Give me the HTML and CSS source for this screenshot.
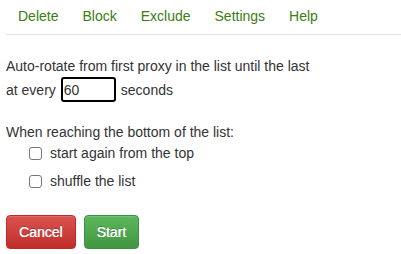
FILE: index.html
```html
<!DOCTYPE html>
<html>
<head>
<meta charset="utf-8">
<link rel="stylesheet" href="styles.css">
</head>
<body>
<div class="page">
  <nav class="nav">
    <a class="nav-link">Delete</a>
    <a class="nav-link">Block</a>
    <a class="nav-link">Exclude</a>
    <a class="nav-link">Settings</a>
    <a class="nav-link">Help</a>
  </nav>
  <p class="line">Auto-rotate from first proxy in the list until the last</p>
  <div class="row">
    <span>at every</span>
    <input class="num" type="text" value="60">
    <span>seconds</span>
  </div>
  <p class="line when">When reaching the bottom of the list:</p>
  <label class="check"><span class="box"></span>start again from the top</label>
  <label class="check"><span class="box"></span>shuffle the list</label>
  <div class="buttons">
    <button class="btn btn-danger">Cancel</button>
    <button class="btn btn-success">Start</button>
  </div>
</div>
</body>
</html>
```
FILE: styles.css
```css
html, body {
  margin: 0;
  padding: 0;
  background: #fff;
}
body {
  font-family: "Liberation Sans", Arial, sans-serif;
  font-size: 14px;
  line-height: 20px;
  color: #333;
}
.page {
  padding: 6px 0 0 6px;
}
.nav {
  display: flex;
  padding-bottom: 8px;
  border-bottom: 1px solid #ddd;
}
.nav-link {
  padding: 0 12px;
  color: #3a7d12;
  text-decoration: none;
}
.line {
  margin: 21px 0 0 0;
}
.row {
  display: flex;
  align-items: center;
  gap: 4px;
  margin-top: 1px;
}
.num {
  width: 55px;
  height: 25px;
  box-sizing: border-box;
  border: 2px solid #000;
  border-radius: 3px;
  padding: 0 1px;
  margin: 0 1px 0 1px;
  font-family: "Liberation Sans", Arial, sans-serif;
  font-size: 14px;
  color: #333;
  outline: none;
}
.when {
  margin-top: 20px;
}
.check {
  display: flex;
  align-items: center;
  height: 20px;
  margin: 1px 0 0 23px;
  gap: 8px;
}
.check + .check {
  margin-top: 8px;
}
.box {
  width: 11px;
  height: 11px;
  border: 1px solid #767676;
  border-radius: 3px;
  background: #fff;
}
.buttons {
  display: flex;
  gap: 8px;
  margin-top: 24px;
}
.btn {
  font-family: "Liberation Sans", Arial, sans-serif;
  font-size: 14px;
  line-height: 20px;
  padding: 6px 12px;
  border-radius: 4px;
  color: #fff;
  text-shadow: 0 -1px 0 rgba(0,0,0,.25), 0.3px 0 0 #fff;
  box-shadow: inset 0 1px 0 rgba(255,255,255,.15), 0 1px 1px rgba(0,0,0,.075);
  border: 1px solid;
  font-weight: normal;
}
.btn-danger {
  background: linear-gradient(to bottom, #d9534f 0, #c12e2a 100%);
  border-color: #b92c28;
}
.btn-success {
  background: linear-gradient(to bottom, #5cb85c 0, #419641 100%);
  border-color: #3e8f3e;
}
```
